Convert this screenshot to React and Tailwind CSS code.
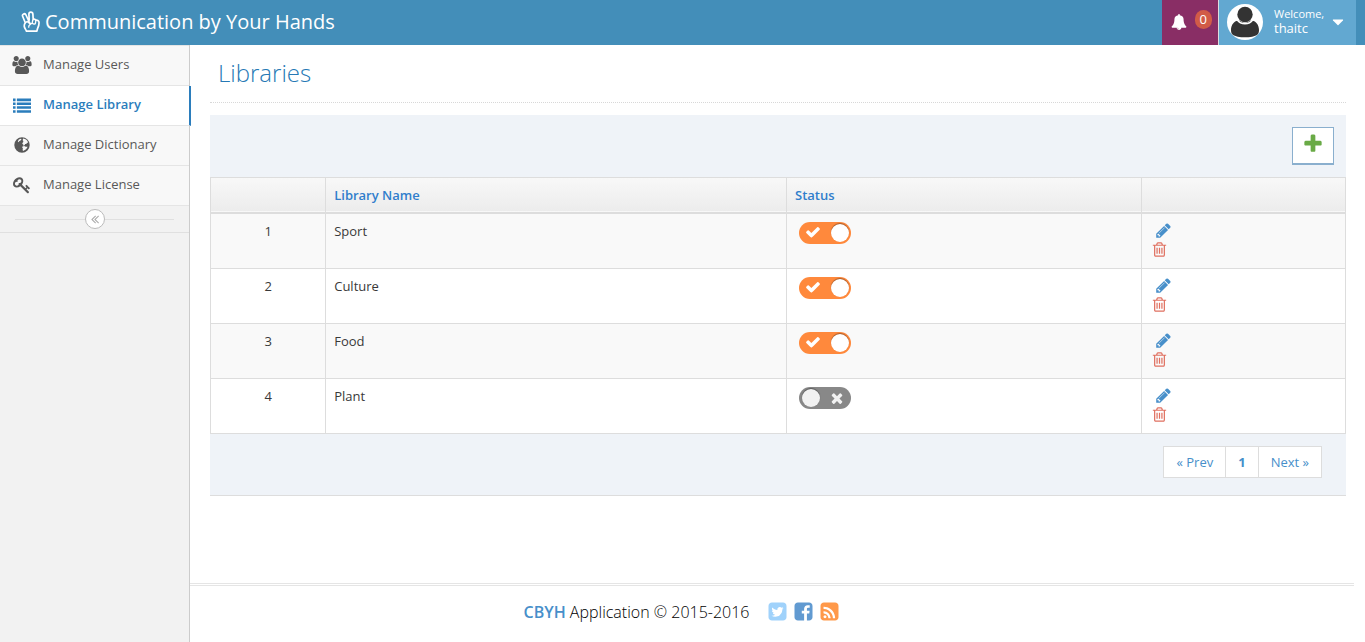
const paths = {
  plus: "M1600 736v192q0 40-28 68t-68 28h-416v416q0 40-28 68t-68 28h-192q-40 0-68-28t-28-68v-416h-416q-40 0-68-28t-28-68v-192q0-40 28-68t68-28h416v-416q0-40 28-68t68-28h192q40 0 68 28t28 68v416h416q40 0 68 28t28 68z",
  check: "M1671 566q0 40-28 68l-724 724-136 136q-28 28-68 28t-68-28l-136-136-362-362q-28-28-28-68t28-68l136-136q28-28 68-28t68 28l294 295 656-657q28-28 68-28t68 28l136 136q28 28 28 68z",
  times: "M1490 1322q0 40-28 68l-136 136q-28 28-68 28t-68-28l-294-294-294 294q-28 28-68 28t-68-28l-136-136q-28-28-28-68t28-68l294-294-294-294q-28-28-28-68t28-68l136-136q28-28 68-28t68 28l294 294 294-294q28-28 68-28t68 28l136 136q28 28 28 68t-28 68l-294 294 294 294q28 28 28 68z",
  pencil: "M491 1536l91-91-235-235-91 91v107h128v128h107zm523-928q0-22-22-22-10 0-17 7l-542 542q-7 7-7 17 0 22 22 22 10 0 17-7l542-542q7-7 7-17zm-54-192l416 416-832 832h-416v-416zm683 96q0 53-37 90l-166 166-416-416 166-165q36-38 90-38 53 0 91 38l235 234q37 39 37 91z",
  trash: "M704 736v576q0 14-9 23t-23 9h-64q-14 0-23-9t-9-23v-576q0-14 9-23t23-9h64q14 0 23 9t9 23zm256 0v576q0 14-9 23t-23 9h-64q-14 0-23-9t-9-23v-576q0-14 9-23t23-9h64q14 0 23 9t9 23zm256 0v576q0 14-9 23t-23 9h-64q-14 0-23-9t-9-23v-576q0-14 9-23t23-9h64q14 0 23 9t9 23zm128 724v-948h-896v948q0 22 7 40.5t14.5 27 10.5 8.5h832q3 0 10.5-8.5t14.5-27 7-40.5zm-672-1076h448l-48-117q-7-9-17-11h-317q-10 2-17 11zm928 32v64q0 14-9 23t-23 9h-96v948q0 83-47 143.5t-113 60.5h-832q-66 0-113-58.5t-47-141.5v-952h-96q-14 0-23-9t-9-23v-64q0-14 9-23t23-9h309l70-167q15-37 54-63t79-26h320q40 0 79 26t54 63l70 167h309q14 0 23 9t9 23z",
  users: "M593 896q-162 5-265 128h-134q-82 0-138-40.5t-56-118.5q0-353 124-353 6 0 43.500 21t97.500 42.500 119 21.500q67 0 133-23-5 37-5 66 0 139 81 256zm1071 637q0 120-73 189.500t-194 69.500h-874q-121 0-194-69.500t-73-189.500q0-53 3.500-103.500t14-109 26.500-108.500 43-97.500 62-81 85.500-53.500 111.500-20q10 0 43 21.500t73 48 107 48 135 21.500 135-21.500 107-48 73-48 43-21.500q61 0 111.500 20t85.500 53.500 62 81 43 97.500 26.500 108.500 14 109 3.500 103.500zm-1024-1277q0 106-75 181t-181 75-181-75-75-181 75-181 181-75 181 75 75 181zm704 384q0 159-112.500 271.500t-271.500 112.500-271.500-112.500-112.500-271.500 112.500-271.500 271.500-112.500 271.500 112.500 112.500 271.500zm576 225q0 78-56 118.500t-138 40.500h-134q-103-123-265-128 81-117 81-256 0-29-5-66 66 23 133 23 59 0 119-21.500t97.500-42.500 43.500-21q124 0 124 353zm-128-609q0 106-75 181t-181 75-181-75-75-181 75-181 181-75 181 75 75 181z",
  list: "M0 256h256v256h-256zM384 256h1408v256h-1408zM0 640h256v256h-256zM384 640h1408v256h-1408zM0 1024h256v256h-256zM384 1024h1408v256h-1408zM0 1408h256v256h-256zM384 1408h1408v256h-1408z",
  globe: "M896 128a768 768 0 1 0 0 1536a768 768 0 1 0 0-1536zM1010 250l180 40 140 90 110 120 70 160-120 10-60 120-120 10-60 110-130 50 10-110-90-50-10-110 80-60 20-120-70-80zM560 380l130-90 120-20 20 110-120 100-100 40-60 90-70-40zM940 1050l170-60 160 70 180 10-70 160-150 150-230 110-50-120 50-100-80-110z",
  key: "M832 512q0-80-56-136t-136-56-136 56-56 136q0 42 19 83-41-19-83-19-80 0-136 56t-56 136 56 136 136 56 136-56 56-136q0-42-19-83 41 19 83 19 80 0 136-56t56-136zm851 704q0 17-49 66t-66 49q-9 0-28.5-16t-36.5-33-38.5-40-24.5-26l-96 96 220 220q28 28 28 68 0 42-39 81t-81 39q-40 0-68-28l-671-671q-176 131-365 131-163 0-265.5-102.5t-102.5-265.5q0-160 95-313t248-248 313-95q163 0 265.5 102.5t102.5 265.5q0 189-131 365l355 355 96-96q-3-3-26-24.5t-40-38.5-33-36.5-16-28.5q0-17 49-66t66-49q13 0 23 10 6 6 46 44.5t82 79.5 86.5 86 73 78 28.5 41z",
  collapse: "M1011 1376q0 13-10 23l-50 50q-10 10-23 10t-23-10l-466-466q-10-10-10-23t10-23l466-466q10-10 23-10t23 10l50 50q10 10 10 23t-10 23l-393 393 393 393q10 10 10 23zm384 0q0 13-10 23l-50 50q-10 10-23 10t-23-10l-466-466q-10-10-10-23t10-23l466-466q10-10 23-10t23 10l50 50q10 10 10 23t-10 23l-393 393 393 393q10 10 10 23z",
  bell: "M912 1696q0-16-16-16-59 0-101.5-42.5t-42.5-101.5q0-16-16-16t-16 16q0 73 51.5 124.5t124.5 51.5q16 0 16-16zm816-288q0 52-38 90t-90 38h-448q0 106-75 181t-181 75-181-75-75-181h-448q-52 0-90-38t-38-90q50-42 91-88t85-119.5 74.5-158.5 50-206 19.5-260q0-152 117-282.5t307-158.5q-8-19-8-39 0-40 28-68t68-28 68 28 28 68q0 20-8 39 190 28 307 158.5t117 282.5q0 139 19.5 260t50 206 74.5 158.5 85 119.5 91 88z",
  caret: "M1408 704q0 26-19 45l-448 448q-19 19-45 19t-45-19l-448-448q-19-19-19-45t19-45 45-19h896q26 0 45 19t19 45z",
  twitter: "M1408 610q-56 25-121 34 68-40 93-117-65 38-134 51-61-66-153-66-87 0-148.5 61.5t-61.5 148.5q0 29 5 48-129-7-242-65t-192-155q-29 50-29 106 0 114 91 175-47-1-100-26v2q0 75 50 133.5t123 72.5q-29 8-51 8-13 0-39-4 21 63 74.5 104t121.5 42q-116 90-261 90-26 0-50-3 148 94 322 94 112 0 210-35.5t168-95 120.5-137 75-162 24.5-168.5q0-18-1-27 63-45 105-109zm256-194v960q0 119-84.5 203.5t-203.5 84.5h-960q-119 0-203.5-84.5t-84.5-203.5v-960q0-119 84.5-203.5t203.5-84.5h960q119 0 203.5 84.5t84.5 203.5z",
  facebook: "M1376 128q119 0 203.5 84.5t84.5 203.5v960q0 119-84.5 203.5t-203.5 84.5h-188v-595h199l30-232h-229v-148q0-56 23.5-84t91.5-28l122-1v-207q-63-9-178-9-136 0-217.5 80t-81.5 226v171h-200v232h200v595h-532q-119 0-203.5-84.5t-84.5-203.5v-960q0-119 84.5-203.5t203.5-84.5h960z",
  rss: "M640 1344q0-53-37.5-90.5t-90.5-37.5-90.5 37.5-37.5 90.5 37.5 90.5 90.5 37.5 90.5-37.5 37.5-90.5zm351 94q-13-232-177-396t-396-177q-14-1-24 9t-10 23v128q0 13 8.5 22t21.5 10q154 11 264 121t121 264q1 13 10 21.5t22 8.5h128q13 0 23-10t9-24zm384 1q-5-154-56-297.5t-139.5-260-205-205-260-139.5-297.5-56q-14-1-23 9-10 10-10 23v128q0 13 9 22t22 10q204 7 378 111.5t278.5 278.5 111.5 378q1 13 10 22t22 9h128q13 0 23-10 11-9 9-23zm289-1023v960q0 119-84.5 203.5t-203.5 84.5h-960q-119 0-203.5-84.5t-84.5-203.5v-960q0-119 84.5-203.5t203.5-84.5h960q119 0 203.5 84.5t84.5 203.5z",
};

function Icon({ name, className }) {
  const width = name === "users" ? 1920 : 1792;
  return (
    <svg viewBox={`0 0 ${width} 1792`} fill="currentColor" fillRule={name === "globe" ? "evenodd" : "nonzero"} className={className} aria-hidden="true">
      <path d={paths[name]} />
    </svg>
  );
}

function PeaceHand() {
  return (
    <svg viewBox="0 0 20 22" className="h-[22px] w-5" fill="none" stroke="currentColor" strokeWidth="1.700" strokeLinecap="round" strokeLinejoin="round" aria-hidden="true">
      <path d="M5.500 20.200c-.4-1.500-1.900-2.700-2.200-4.700-.2-1.400.2-2.600 1-3.700L1.700 5.500C.7 3 4 1.700 5 4l2.300 5 .9.100-.3-5.900c0-2.800 3.800-2.800 4 0l.3 5.300c1-.5 2.100-.2 2.700.8 1.300-.4 2.900.3 3.100 1.900.2 2.500-.5 4.300-1.300 6-.4.900-.6 1.900-.8 3z" />
      <path d="M4.600 11.500c1-1.100 2.200-.9 3 .1l1.700 1.900M7.300 9.300l1.800 2.900c.6.900 2.100.6 2.200-.6l.5-2.800M14.900 9.400l-.4 2.600c-.3 1.400-2.200 1.400-2.900.3M9.300 13.500c-1.300.6-1.700 1.500-1.600 2.700" strokeWidth="1.300" />
    </svg>
  );
}

function Avatar() {
  return (
    <svg viewBox="0 0 36 36" className="size-9" aria-hidden="true">
      <circle cx="18" cy="18" r="18" fill="#fff" />
      <circle cx="18" cy="10.500" r="7.700" fill="#333" />
      <path d="M4 26c0-5 3-9.500 8-9.500 1.500 0 3 2.500 6 2.500s4.500-2.500 6-2.500c5 0 8 4.500 8 9.500 0 2-.5 3.500-1.500 4.500-2.500 2.200-7.500 2.800-12.500 2.800s-10-.6-12.500-2.800c-1-1-1.500-2.500-1.500-4.500z" fill="#333" />
      <path d="M10 15.500c2 3 4.500 4.300 8 4.300s6-1.300 8-4.300" fill="none" stroke="#fff" strokeWidth="1.500" />
    </svg>
  );
}

const menu = [
  { label: "Manage Users", icon: "users" },
  { label: "Manage Library", icon: "list", active: true },
  { label: "Manage Dictionary", icon: "globe" },
  { label: "Manage License", icon: "key" },
];

const libraries = [
  { id: 1, name: "Sport", active: true },
  { id: 2, name: "Culture", active: true },
  { id: 3, name: "Food", active: true },
  { id: 4, name: "Plant", active: false },
];

function Header() {
  return (
    <header className="flex h-[45px] shrink-0 items-stretch justify-between bg-[#438eb9] pr-[9px] text-white">
      <a href="#home" className="flex items-center gap-1 pb-[2px] pl-[21px] text-xl">
        <PeaceHand />
        Communication by Your Hands
      </a>
      <div className="flex">
        <button type="button" aria-label="Notifications" className="flex w-14 items-center justify-end gap-2 bg-[#892e65] pr-1.5 pb-1.5">
          <Icon name="bell" className="mt-1 size-4" />
          <span className="rounded-full bg-[#d15b47] px-[5px] text-[13px] leading-[19px]">0</span>
        </button>
        <button type="button" className="flex w-[138px] items-center border-l border-[#ddd] bg-[#62a8d1] pb-px pl-2 text-left text-[13px] leading-[14px]">
          <Avatar />
          <span className="ml-[11px] w-[52px] pb-[3px]">
            <small className="block text-[11px]">Welcome,</small>
            thaitc
          </span>
          <Icon name="caret" className="ml-[3px] size-[18px]" />
        </button>
      </div>
    </header>
  );
}

function Sidebar() {
  return (
    <aside className="w-[190px] shrink-0 border-r border-[#ccc] bg-[#f2f2f2]">
      <nav className="border-t border-[#e5e5e5]">
        {menu.map((item) => (
          <a
            key={item.label}
            href="#menu"
            className={
              item.active
                ? "-mr-[2px] flex h-10 items-center gap-[11px] border-r-2 border-b border-r-[#2b7dbc] border-b-[#e5e5e5] bg-white pb-1 pl-3 font-semibold text-[#2b7dbc]"
                : "flex h-10 items-center gap-[11px] border-b border-[#e5e5e5] bg-[#f8f8f8] pb-1 pl-3 text-[#585858]"
            }
          >
            <Icon name={item.icon} className="mt-[2px] h-[18px] w-5" />
            {item.label}
          </a>
        ))}
      </nav>
      <div className="flex h-[27px] items-center border-b border-[#e0e0e0] px-[15px]">
        <span className="h-px flex-1 bg-[#e0e0e0]" />
        <button type="button" aria-label="Collapse menu" className="flex size-5 items-center justify-center rounded-full border border-[#bbb] bg-white text-[#aaa]">
          <Icon name="collapse" className="size-[14px]" />
        </button>
        <span className="h-px flex-1 bg-[#e0e0e0]" />
      </div>
    </aside>
  );
}

function Toggle({ label, on }) {
  return (
    <label className="relative mt-px ml-1 block h-[22px] w-[52px]">
      <input type="checkbox" role="switch" defaultChecked={on} aria-label={label} className="peer absolute inset-0 size-full cursor-pointer appearance-none rounded-full bg-[#888] checked:bg-[#ff893c]" />
      <span className="pointer-events-none absolute top-[2px] left-[3px] size-[18px] rounded-full bg-[#f2f2f2] shadow-[0_-1px_1px_rgba(0,0,0,0.35)] peer-checked:left-8 peer-checked:bg-white" />
      <Icon name="check" className="pointer-events-none absolute top-[2px] left-1.5 hidden size-4 text-white peer-checked:block" />
      <Icon name="times" className="pointer-events-none absolute top-[3px] left-[30px] size-4 text-[#f2f2f2] peer-checked:hidden" />
    </label>
  );
}

function LibraryTable() {
  const head = "border border-[#ddd] px-2 text-left font-semibold text-[#307ecc]";
  const cell = "border border-[#ddd] px-2 py-[7px] align-top";
  return (
    <table className="w-full table-fixed border-collapse bg-white text-[#393939]">
      <colgroup>
        <col className="w-[10.150%]" />
        <col className="w-[40.600%]" />
        <col className="w-[31.250%]" />
        <col />
      </colgroup>
      <thead>
        <tr className="h-[35px] border-b-2 border-[#ddd] bg-linear-to-b from-[#f8f8f8] to-[#ececec]">
          <th className={head} aria-label="Number" />
          <th className={head}>Library Name</th>
          <th className={head}>Status</th>
          <th className={head} aria-label="Actions" />
        </tr>
      </thead>
      <tbody>
        {libraries.map((row) => (
          <tr key={row.id} className="h-[55px] first:h-14 odd:bg-[#f9f9f9]">
            <td className={`${cell} text-center`}>{row.id}</td>
            <td className={cell}>{row.name}</td>
            <td className={cell}><Toggle label={`${row.name} status`} on={row.active} /></td>
            <td className={cell}>
              <div className="flex flex-col items-start gap-[2px] pt-px pl-px">
                <button type="button" aria-label={`Edit ${row.name}`} className="pl-1 text-[#478fca]">
                  <Icon name="pencil" className="size-[17px]" />
                </button>
                <button type="button" aria-label={`Delete ${row.name}`} className="text-[#e07060]">
                  <Icon name="trash" className="size-[17px]" />
                </button>
              </div>
            </td>
          </tr>
        ))}
      </tbody>
    </table>
  );
}

export default function App() {
  const page = "border border-[#ddd] bg-white px-3 py-[5px] text-[#478fca]";
  return (
    <div className="flex min-h-screen flex-col bg-white font-['Open_Sans',sans-serif] text-[13px] leading-5">
      <Header />
      <div className="flex flex-1">
        <Sidebar />
        <div className="flex min-w-0 flex-1 flex-col">
          <main className="flex-1 pr-[19px] pl-5">
            <div className="mb-3 h-[58px] border-b border-dotted border-[#d8d8d8] pt-3 pl-2">
              <h1 className="text-2xl font-light text-[#2679b5]">Libraries</h1>
            </div>
            <section aria-label="Libraries" className="border-b border-[#ddd] bg-[#eff3f8]">
              <div className="flex h-[62px] items-center justify-end px-3">
                <button type="button" aria-label="Add library" className="flex h-[38px] w-[42px] items-center justify-center border border-b-2 border-[#8aafce] bg-white pb-[3px] text-[#69aa46]">
                  <Icon name="plus" className="size-[22px]" />
                </button>
              </div>
              <LibraryTable />
              <nav aria-label="Pagination" className="flex h-[61px] items-start justify-end pt-3 pr-6">
                <a href="#prev" className={page}>« Prev</a>
                <a href="#1" className={`${page} -mx-px font-bold`}>1</a>
                <a href="#next" className={page}>Next »</a>
              </nav>
            </section>
          </main>
          <footer className="mr-[11px] flex h-[59px] items-center justify-center border-t-[3px] border-double border-[#e5e5e5] pr-[180px] pb-1 text-base text-[#393939]">
            <p className="font-light text-black"><b className="font-semibold text-[#478fca]">CBYH</b> Application © 2015-2016</p>
            <div className="ml-[18px] flex gap-[5px] pb-[2px]">
              <a href="#twitter" aria-label="Twitter" className="text-[#a0d2fb]"><Icon name="twitter" className="size-[21px]" /></a>
              <a href="#facebook" aria-label="Facebook" className="text-[#619ad1]"><Icon name="facebook" className="size-[21px]" /></a>
              <a href="#rss" aria-label="RSS" className="text-[#ff994a]"><Icon name="rss" className="size-[21px]" /></a>
            </div>
          </footer>
        </div>
      </div>
    </div>
  );
}
